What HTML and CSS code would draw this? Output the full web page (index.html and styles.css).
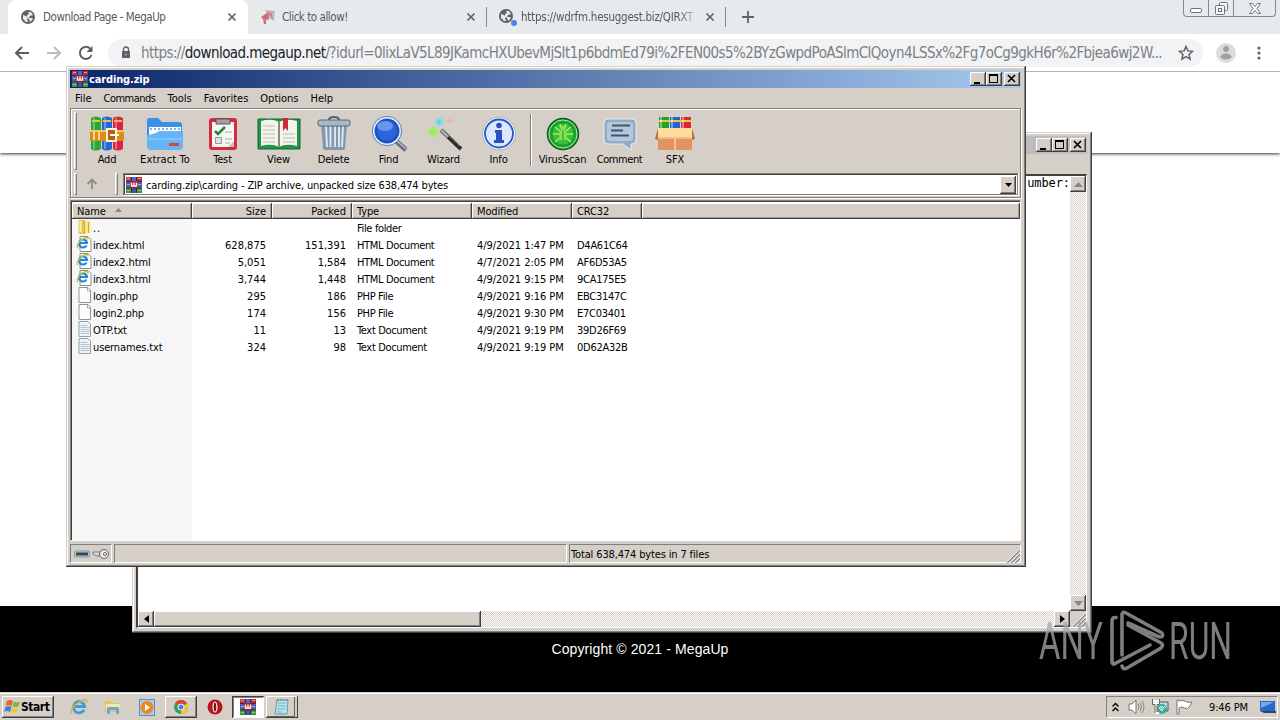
FILE: index.html
```html
<!DOCTYPE html>
<html lang="en">
<head>
  <meta charset="UTF-8">
  <title>Download Page - MegaUp</title>
  <link rel="stylesheet" href="styles.css">
</head>
<body>

<!-- shared icons -->
<svg class="sprite" width="0" height="0">
  <symbol id="globe" viewBox="0 0 14 14">
    <circle cx="7" cy="7" r="7" fill="#5f6368"/>
    <path d="M2 5l3 1 2 2-1 1 1 3-2 0-3-3zM7 2l3 0 2 3-3 1-1 2 3 0 1 1-3 3-1-3-2-2 0-2 2-1z" fill="#e8eaed"/>
  </symbol>
  <symbol id="rar" viewBox="0 0 16 16">
    <path d="M0 0h5v5H0z" fill="#c03070"/><path d="M5 0h6v5H5z" fill="#3c70d8"/><path d="M11 0h5v5h-5z" fill="#b82448"/>
    <path d="M0 5h16v6H0z" fill="#3c60c8"/><path d="M0 11h16v5H0z" fill="#28a048"/><path d="M5 11h6v5H5z" fill="#3858b0"/>
    <path d="M0 4.500h16M0 11h16M5.500 0v16M10.500 0v16" stroke="#4c2430"/>
    <path d="M1 1.500h3M12 1.500h3M1 13.500h3M12 13.500h3M1 7.500h3M12 7.500h3" stroke="#e8a848"/>
    <path d="M4 4h8v7H4z" fill="#a02434"/><path d="M5.500 5.500v3.500h5V5.500M8 5.500v3.500" stroke="#fff" stroke-width="1.400" fill="none"/>
  </symbol>
  <symbol id="min" viewBox="0 0 16 14"><path d="M4 10h6v2H4z"/></symbol>
  <symbol id="max" viewBox="0 0 16 14"><path d="M3 2h9v9H3zM4 4v6h7V4z" fill-rule="evenodd"/></symbol>
  <symbol id="cross" viewBox="0 0 16 14"><path d="M4 3l7 7M11 3l-7 7" stroke="#000" stroke-width="1.7"/></symbol>
  <symbol id="tabx" viewBox="0 0 10 10"><path d="M1.5 1.5l7 7M8.5 1.5l-7 7" stroke="#5f6368" stroke-width="1.7"/></symbol>
  <symbol id="ie" viewBox="0 0 16 16">
    <path d="M12.5 10.5A5 5 0 1 1 13 7.500H4.500" fill="none" stroke="#3c9ce0" stroke-width="2.600"/>
    <path d="M2 14C-1 12 4 4 13 1.500c3-.5 2 2 1 3" fill="none" stroke="#e0b030" stroke-width="1.300"/>
  </symbol>
  <symbol id="html" viewBox="0 0 16 16">
    <path d="M3.500.5h8l3 3v12h-11z" fill="#fff" stroke="#8c8c84"/>
    <path d="M10 9.500A4 4 0 1 1 10.500 7H3.500" fill="none" stroke="#2484d8" stroke-width="2.200"/>
    <path d="M1.500 12C-1 10 4 2.500 10 1.500c2 0 1.500 1.500 1 2" fill="none" stroke="#b8cc38" stroke-width="1.400"/>
  </symbol>
  <symbol id="blank" viewBox="0 0 16 16"><path d="M2.500.5h9l2.500 2.500v12.500H2.500z" fill="#fcfcfc" stroke="#94948e"/><path d="M11 1v3h3" fill="none" stroke="#aaa"/></symbol>
  <symbol id="txt" viewBox="0 0 16 16"><path d="M2.500.5h9l2.500 2.500v12.500H2.500z" fill="#eef4f6" stroke="#94a0a4"/><path d="M4 4.500h7M4 6.500h9M4 8.500h9M4 10.500h9M4 12.500h9" stroke="#b0c4ce"/></symbol>
  <symbol id="grip" viewBox="0 0 14 14"><path d="M1 14L14 1M5 14l9-9M9 14l5-5" stroke="#808080" stroke-width="1.500"/><path d="M0 14L14 0M4 14L14 4M8 14l6-6" stroke="#fff" stroke-width=".8"/></symbol>
</svg>

<div class="browser">
  <div class="tabs">
    <div class="tab active">
      <svg class="fav" width="14" height="14"><use href="#globe"/></svg>
      <span class="tab-title">Download Page - MegaUp</span>
      <svg class="close" width="10" height="10"><use href="#tabx"/></svg>
    </div>
    <div class="tab">
      <svg class="fav" width="16" height="16" viewBox="0 0 16 16"><path d="M6 1l9 1-1 8-8-1z" fill="#c4b4b8"/><path d="M7 3l5 1v4l-4-1z" fill="#df7e8c"/><path d="M1 8l6-4 2 7-6-1zM3 10l3 1v4H4z" fill="#cf6878"/><path d="M11 9l3 2" stroke="#888"/></svg>
      <span class="tab-title">Click to allow!</span>
      <svg class="close" width="10" height="10"><use href="#tabx"/></svg>
    </div>
    <div class="tab">
      <svg class="fav" width="18" height="18" viewBox="0 0 18 18"><use href="#globe" width="14" height="14" x="0" y="1"/><circle cx="15" cy="15" r="3" fill="#4285f4"/></svg>
      <span class="tab-title fade">https://wdrfm.hesuggest.biz/QIRXT</span>
      <svg class="close" width="10" height="10"><use href="#tabx"/></svg>
    </div>
    <svg class="plus" width="12" height="12" viewBox="0 0 12 12"><path d="M6 0v12M0 6h12" stroke="#5f6368" stroke-width="1.800"/></svg>
    <div class="win-controls">
      <span><svg width="12" height="5"><rect x=".5" y=".5" width="11" height="4" rx="1.500" fill="#fff" stroke="#70757c"/></svg></span>
      <span><svg width="13" height="13" fill="#f4f6f8" stroke="#70757c"><rect x="4.500" y=".5" width="8" height="8" rx="1"/><rect x=".5" y="3.500" width="9" height="9" rx="1"/><rect x="3.500" y="6.500" width="3" height="3"/></svg></span>
      <span class="wide"><svg width="12" height="11" fill="#fff" stroke="#70757c"><path d="M.5.5h3L6 3.500 8.500.5h3L8 5.500l3.500 5h-3L6 7.500l-2.500 3h-3L4 5.500z"/></svg></span>
    </div>
  </div>

  <div class="toolbar">
    <svg width="16" height="16" viewBox="0 0 16 16" class="nav"><path d="M15 8H2M8 2L2 8l6 6" stroke="#5a5e62"/></svg>
    <svg width="16" height="16" viewBox="0 0 16 16" class="nav"><path d="M1 8h13M8 2l6 6-6 6" stroke="#bcbcbc"/></svg>
    <svg width="16" height="16" viewBox="0 0 16 16" class="nav"><path d="M13.500 10A6 6 0 1 1 12 3.500l1.500 2" stroke="#5a5e62"/><path d="M14.500 1v6h-6z" fill="#5a5e62"/></svg>
    <div class="omnibox">
      <svg width="10" height="13" viewBox="0 0 10 13"><path d="M1 5h8v7H1z" fill="#5f6368"/><path d="M2.500 5V3.500a2.500 2.500 0 0 1 5 0V5" fill="none" stroke="#5f6368" stroke-width="1.400"/><circle cx="5" cy="8.500" r="1" fill="#aaa"/></svg>
      <span class="url">https://<b>download.megaup.net</b>/?idurl=0lixLaV5L89JKamcHXUbevMjSIt1p6bdmEd79i%2FEN00s5%2BYzGwpdPoASlmClQoyn4LSSx%2Fg7oCg9gkH6r%2Fbjea6wj2W...</span>
      <svg class="star" width="16" height="16" viewBox="0 0 16 16"><path d="M8 1.500l1.900 4.400 4.700.4-3.600 3.100 1.100 4.700L8 11.600l-4.100 2.500L5 9.400 1.400 6.300l4.700-.4z" fill="none" stroke="#5f6368" stroke-width="1.500"/></svg>
    </div>
    <svg class="avatar" width="20" height="20" viewBox="0 0 20 20"><circle cx="10" cy="10" r="10" fill="#dcdcdc"/><circle cx="10" cy="6" r="3" fill="#a0a0a0"/><ellipse cx="10" cy="13.500" rx="5.500" ry="3" fill="#a0a0a0"/></svg>
    <svg class="dots" width="4" height="14" fill="#5f6368"><circle cx="2" cy="2" r="1.600"/><circle cx="2" cy="7" r="1.600"/><circle cx="2" cy="12" r="1.600"/></svg>
  </div>

  <div class="page-header"></div>
  <div class="page-body"></div>
  <div class="page-footer">Copyright © 2021 - MegaUp</div>
</div>

<!-- notepad -->
<div class="window notepad">
  <div class="titlebar inactive">
    <div class="controls">
      <i><svg><use href="#min"/></svg></i><i><svg><use href="#max"/></svg></i><i class="x"><svg><use href="#cross"/></svg></i>
    </div>
  </div>
  <div class="note-menu"></div>
  <div class="note-area">
    <div class="note-text">umber:</div>
    <div class="vscroll">
      <i><svg width="9" height="5"><path d="M0 5l4.500-5L9 5z" fill="#888"/></svg></i>
      <i><svg width="9" height="5"><path d="M0 0l4.500 5L9 0z" fill="#888"/></svg></i>
    </div>
    <div class="hscroll">
      <i><svg width="5" height="8"><path d="M5 0L0 4l5 4z"/></svg></i>
      <div class="thumb"></div>
      <i class="end"><svg width="5" height="8"><path d="M0 0l5 4-5 4z"/></svg></i>
    </div>
    <div class="corner"><svg width="14" height="14"><use href="#grip"/></svg></div>
  </div>
</div>

<!-- winrar -->
<div class="window winrar">
  <div class="titlebar">
    <svg class="app" width="16" height="16"><use href="#rar"/></svg>
    <span>carding.zip</span>
    <div class="controls">
      <i><svg><use href="#min"/></svg></i><i><svg><use href="#max"/></svg></i><i class="x"><svg><use href="#cross"/></svg></i>
    </div>
  </div>
  <div class="menu">
    <span>File</span><span class="commands">Commands</span><span>Tools</span><span>Favorites</span><span>Options</span><span>Help</span>
  </div>

  <div class="rebar">
    <div class="tools">
      <div class="handle"></div>
      <div class="tool w58">
        <svg width="36" height="36" viewBox="0 0 36 36">
          <path d="M2 2q5-3 10 0v31q-5 3-10 0z" fill="#28a838"/><path d="M13 2q5-3 10 0v31q-5 3-10 0z" fill="#2468d8"/><path d="M24 2q5-3 10 0v31q-5 3-10 0z" fill="#dc2440"/>
          <path d="M5 2v31M16 2v31M27 2v31" stroke="#fff" stroke-opacity=".3" stroke-width="2"/>
          <path d="M3 5h8M14 5h8M25 5h8" stroke="#f0c040" stroke-width="2"/>
          <path d="M1 14h34v11H1z" fill="#e08a18"/><path d="M1 15h34" stroke="#f8c860" stroke-width="2"/>
          <path d="M5 15v9M10 15v9" stroke="#fcd890" stroke-width="2"/><path d="M18 13h9v12h-9z" fill="#b86010" stroke="#fff3dc" stroke-width="2"/><path d="M21 19h9" stroke="#fff" stroke-width="2"/>
        </svg>
        <span>Add</span>
      </div>
      <div class="tool w58">
        <svg width="38" height="36" viewBox="0 0 38 36">
          <path d="M1 10V4q0-2 3-2h8l4 4h17q3 0 3 3v12H1z" fill="#3a90ea"/><path d="M3 11h32v12H3z" fill="#fff"/><path d="M4 13h30" stroke="#8ab0d8" stroke-dasharray="2 2" stroke-width="2"/>
          <path d="M1 19q8-1 12-4h24v15q0 4-4 4H5q-4 0-4-4z" fill="#64b4fa"/><path d="M2 23h34" stroke="#9cd2ff"/><path d="M23 27h10v3H23z" fill="#d84830"/>
        </svg>
        <span class="extract">Extract To</span>
      </div>
      <div class="tool w57">
        <svg width="32" height="36" viewBox="0 0 32 36">
          <rect x="2" y="2" width="28" height="32" rx="3" fill="#d42c3c"/><path d="M5 6h22v25H5z" fill="#f6f6f2"/><path d="M9 3h14v5H9z" fill="#a0a4a8" stroke="#555"/>
          <path d="M8 15l3 3 7-7" fill="none" stroke="#208838" stroke-width="2.500"/><path d="M18 16h7M18 23h7M18 27h5" stroke="#aaa"/><path d="M8.500 21.500h6v6h-6z" fill="#e0e0e0" stroke="#999"/><path d="M27 31l-6 0 6-6z" fill="#b8c0c0"/>
        </svg>
        <span>Test</span>
      </div>
      <div class="tool">
        <svg width="44" height="36" viewBox="0 0 44 36">
          <path d="M1 3h42v30H1z" fill="#209448" stroke="#12682c"/><path d="M4 5q11-3 18 1 7-4 18-1v25q-11-3-18 1-7-4-18-1z" fill="#f6f4e8"/>
          <path d="M22 5v26" stroke="#888" stroke-width="2"/><path d="M6 10h12M6 14h12M6 18h12M6 22h12M6 26h12M26 18h12M26 22h12M26 26h12" stroke="#b8bcbc"/><path d="M26 2h5v13l-2.500-3-2.500 3z" fill="#cc2838"/>
        </svg>
        <span>View</span>
      </div>
      <div class="tool">
        <svg width="34" height="36" viewBox="0 0 34 36">
          <path d="M4 8h26l-2 24q0 2-3 2H9q-3 0-3-2z" fill="#8296ac"/><path d="M9 10l1 21M13.500 10v21M18 10v21M22 10v21M26 10l-1 21" stroke="#d8e4ee" stroke-width="2"/>
          <rect x="1" y="4" width="32" height="6" rx="2" fill="#a8b8c8" stroke="#566878"/><path d="M12 4q0-3 5-3t5 3" fill="none" stroke="#56606c" stroke-width="2"/>
        </svg>
        <span>Delete</span>
      </div>
      <div class="tool">
        <svg width="36" height="36" viewBox="0 0 36 36">
          <path d="M25 25l10 9" stroke="#666c74" stroke-width="5"/><path d="M25 24l10 9" stroke="#b4bcc4" stroke-width="1.500"/>
          <circle cx="16" cy="15" r="13.500" fill="#2a66da" stroke="#e4eefc" stroke-width="2"/><circle cx="16" cy="15" r="14.700" fill="none" stroke="#5a80b8"/><circle cx="16" cy="15" r="11" fill="none" stroke="#2050b8" stroke-width="2"/><ellipse cx="14" cy="10" rx="8" ry="5" fill="#7cacf4" opacity=".7"/>
        </svg>
        <span>Find</span>
      </div>
      <div class="tool">
        <svg width="36" height="36" viewBox="0 0 36 36">
          <path d="M15 14l20 19" stroke="#2c2c2c" stroke-width="4"/><path d="M15 14l7 7" stroke="#aaa" stroke-width="3"/><path d="M17 14l17 16" stroke="#888"/>
          <circle cx="7" cy="16" r="6" fill="#a8f070" opacity=".4"/><path d="M7 10l2 4 4 2-4 2-2 4-2-4-4-2 4-2z" fill="#9cec58"/>
          <circle cx="13" cy="6" r="5" fill="#78e0e8" opacity=".5"/><path d="M13 2l1 3 3 1-3 1-1 3-1-3-3-1 3-1z" fill="#58d4e8"/><path d="M24 2v6M21 5h6" stroke="#f0a0a8"/>
        </svg>
        <span>Wizard</span>
      </div>
      <div class="tool">
        <svg width="36" height="36" viewBox="0 0 36 36">
          <circle cx="18" cy="17.500" r="16.500" fill="#ecf2fa" stroke="#aab4c4"/><circle cx="18" cy="17.500" r="14" fill="#dce8fc" stroke="#2858c8" stroke-width="1.800"/>
          <circle cx="18" cy="9.500" r="2.800" fill="#2850c0"/><path d="M14 14h7v10h2v3H13v-3h2v-7h-1z" fill="#2850c0"/>
        </svg>
        <span>Info</span>
      </div>
      <div class="sep"></div>
      <div class="tool w57">
        <svg width="36" height="36" viewBox="0 0 36 36">
          <circle cx="18" cy="18" r="15.500" fill="#18a028" stroke="#106018" stroke-width="1.500"/><circle cx="18" cy="18" r="14" fill="none" stroke="#b8e4b8"/><circle cx="18" cy="18" r="10.500" fill="#38c038"/>
          <path d="M10 11l5 4M26 11l-5 4M8 18h7M28 18h-7M10 26l5-4M26 26l-5-4M15 8l1 4M21 8l-1 4" stroke="#a8ec70" stroke-width="1.500"/><ellipse cx="18" cy="19" rx="4" ry="6" fill="#88e050"/><circle cx="18" cy="12" r="2.500" fill="#88e050"/><path d="M18 14v11" stroke="#209428"/>
        </svg>
        <span>VirusScan</span>
      </div>
      <div class="tool w57">
        <svg width="36" height="36" viewBox="0 0 36 36">
          <path d="M6 3h24q4 0 4 4v17q0 4-4 4h-1v6l-8-6H6q-4 0-4-4V7q0-4 4-4z" fill="#94abc8" stroke="#e4ecf4"/><rect x="5" y="6" width="26" height="19" rx="3" fill="#b4c8dc"/>
          <path d="M10 9.500h18M9 14.500h12M9 19.500h18" stroke="#40546c" stroke-width="1.800"/>
        </svg>
        <span class="comment">Comment</span>
      </div>
      <div class="tool w54">
        <svg width="40" height="36" viewBox="0 0 40 36">
          <path d="M4 1h10v13H4z" fill="#20a030"/><path d="M15 1h10v13H15z" fill="#2464d0"/><path d="M26 1h10v13H26z" fill="#d82838"/><path d="M4 5h32" stroke="#ecc840" stroke-width="2"/><path d="M6 1v12M17 1v12M28 1v12" stroke="#fff" stroke-opacity=".4" stroke-width="2"/>
          <path d="M3 21h34v13H3z" fill="#e09460"/><path d="M3 12h34v9H3z" fill="#fcdc9c"/><path d="M3 12L0 23l3 1zM37 12l3 11-3 1z" fill="#b87040"/><path d="M3 21h34v2H3z" fill="#f8b880"/><path d="M19 23h2v11h-2z" fill="#f4c498"/>
        </svg>
        <span>SFX</span>
      </div>
    </div>
    <div class="address">
      <div class="handle"></div>
      <svg class="up" width="12" height="12"><path d="M6 11V2M1.500 6L6 1.500 10.500 6" fill="none" stroke="#8c8c8c" stroke-width="1.800"/></svg>
      <div class="handle second"></div>
      <div class="combo">
        <svg width="16" height="16"><use href="#rar"/></svg>
        <span>carding.zip\carding - ZIP archive, unpacked size 638,474 bytes</span>
        <i><svg width="7" height="4"><path d="M0 0h7L3.500 4z"/></svg></i>
      </div>
    </div>
  </div>

  <div class="list">
    <div class="row head">
      <div>Name<svg width="7" height="4"><path d="M0 4l3.500-4L7 4z" fill="#888"/></svg></div><div class="num">Size</div><div class="num">Packed</div><div>Type</div><div>Modified</div><div>CRC32</div><div></div>
    </div>
    <div class="row"><div class="name"><svg viewBox="0 0 16 16"><path d="M2 1h7v14H2z" fill="#e8c850"/><path d="M8 2h6v12H8z" fill="#f8e690"/><path d="M8 2v13M12 3v11" stroke="#d0a838"/><path d="M4 2v11" stroke="#fbeeac" stroke-width="2"/></svg><span class="up-dir">..</span></div><div></div><div></div><div class="type">File folder</div></div>
    <div class="row"><div class="name"><svg><use href="#html"/></svg><span>index.html</span></div><div class="num">628,875</div><div class="num">151,391</div><div class="type">HTML Document</div><div class="date">4/9/2021 1:47 PM</div><div class="crc">D4A61C64</div></div>
    <div class="row"><div class="name"><svg><use href="#html"/></svg><span>index2.html</span></div><div class="num">5,051</div><div class="num">1,584</div><div class="type">HTML Document</div><div class="date">4/7/2021 2:05 PM</div><div class="crc">AF6D53A5</div></div>
    <div class="row"><div class="name"><svg><use href="#html"/></svg><span>index3.html</span></div><div class="num">3,744</div><div class="num">1,448</div><div class="type">HTML Document</div><div class="date">4/9/2021 9:15 PM</div><div class="crc">9CA175E5</div></div>
    <div class="row"><div class="name"><svg><use href="#blank"/></svg><span>login.php</span></div><div class="num">295</div><div class="num">186</div><div class="type">PHP File</div><div class="date">4/9/2021 9:16 PM</div><div class="crc">EBC3147C</div></div>
    <div class="row"><div class="name"><svg><use href="#blank"/></svg><span>login2.php</span></div><div class="num">174</div><div class="num">156</div><div class="type">PHP File</div><div class="date">4/9/2021 9:30 PM</div><div class="crc">E7C03401</div></div>
    <div class="row"><div class="name"><svg><use href="#txt"/></svg><span>OTP.txt</span></div><div class="num">11</div><div class="num">13</div><div class="type">Text Document</div><div class="date">4/9/2021 9:19 PM</div><div class="crc">39D26F69</div></div>
    <div class="row"><div class="name"><svg><use href="#txt"/></svg><span>usernames.txt</span></div><div class="num">324</div><div class="num">98</div><div class="type">Text Document</div><div class="date">4/9/2021 9:19 PM</div><div class="crc">0D62A32B</div></div>
  </div>

  <div class="status">
    <div class="cell icons">
      <svg width="36" height="12" viewBox="0 0 36 12"><rect x=".5" y="3" width="15" height="6" rx="1" fill="#b4c4d0" stroke="#8898a4"/><path d="M2 4.500h12v3H2z" fill="#384850"/><path d="M19 4h8v2l-2 0 0 2h-2l-4-2z" fill="#ddd" stroke="#777"/><circle cx="30" cy="6" r="4.500" fill="#e8e8e8" stroke="#666"/><circle cx="31" cy="6" r="1.500" fill="#fff" stroke="#666"/></svg>
    </div>
    <div class="cell mid"></div>
    <div class="cell total">Total 638,474 bytes in 7 files<svg width="14" height="14"><use href="#grip"/></svg></div>
  </div>
</div>

<div class="taskbar">
  <div class="start">
    <svg width="17" height="16" viewBox="0 0 17 16"><path d="M3 2q3-2 6 0L7.500 7q-3-2-6 0z" fill="#e8622c"/><path d="M10 2.500q3 1.500 6 0L14.500 7q-3 2-6 0z" fill="#7cb83c"/><path d="M1.500 8q3-2 6 0L6 13q-3-2-6 0z" fill="#3c84d8"/><path d="M8 8.500q3 2 6 0L12.500 13q-3 2-6 0z" fill="#f4c430"/></svg>
    <span>Start</span>
  </div>
  <div class="launch ie"><svg width="18" height="18"><use href="#ie"/></svg></div>
  <div class="launch"><svg width="18" height="16" viewBox="0 0 18 16"><path d="M1 2h6l2 2h7v9H1z" fill="#e8c45c"/><path d="M2 5h14v6H2z" fill="#f8e8a4"/><path d="M3 15V9q0-1 1-1h10q1 0 1 1v6h-3v-4H6v4z" fill="#68a8dc"/></svg></div>
  <div class="launch"><svg width="16" height="17" viewBox="0 0 16 17"><rect x=".5" y=".5" width="15" height="16" fill="#a8ccec" stroke="#5890c4"/><circle cx="8" cy="8.500" r="6.500" fill="#f08820"/><path d="M6 5l5 3.500L6 12z" fill="#fff"/></svg></div>
  <div class="task">
    <svg width="14" height="14" viewBox="0 0 14 14"><circle cx="7" cy="7" r="7" fill="#38a050"/><path d="M7 7L1 3.500A7 7 0 0 1 13 3.500z" fill="#dc4434"/><path d="M7 7l6-3.500A7 7 0 0 1 7 14z" fill="#f8c828"/><circle cx="7" cy="7" r="3.300" fill="#fff"/><circle cx="7" cy="7" r="2.500" fill="#4080e8"/></svg>
  </div>
  <div class="launch opera"><svg width="16" height="16" viewBox="0 0 16 16"><circle cx="8" cy="8" r="7.500" fill="#b81420"/><ellipse cx="8" cy="8" rx="2.500" ry="5.500" fill="#fff"/><ellipse cx="8" cy="8" rx="1.300" ry="4.500" fill="#7c1018"/></svg></div>
  <div class="task pressed"><svg width="16" height="16"><use href="#rar"/></svg></div>
  <div class="task stacked"><svg width="16" height="18" viewBox="0 0 16 18"><path d="M3 2h11l-1 14H1z" fill="#b8e4ec" stroke="#6c98a4"/><path d="M4 5h8M4 8h8M3 11h8M3 14h5" stroke="#6cb4c4"/><path d="M4 1v2M7 1v2M10 1v2M13 1v2" stroke="#777"/></svg></div>
  <div class="tray">
    <svg width="7" height="10"><path d="M.5 4.500l3-3 3 3M.5 9l3-3 3 3" fill="none" stroke="#000" stroke-width="1.400"/></svg>
    <svg width="17" height="16" viewBox="0 0 17 16"><path d="M1 5h3l4-4v14l-4-4H1z" fill="#fff" stroke="#777"/><path d="M10 5q2 3 0 6M12 3.500q3 4.500 0 9M14 2q4 6 0 12" fill="none" stroke="#888"/></svg>
    <svg width="17" height="16" viewBox="0 0 17 16"><path d="M4 3h12v9H4z" fill="#c8dce0" stroke="#555"/><circle cx="10" cy="10" r="5" fill="#3ca89c"/><path d="M7 9l3-2 2 2-2 3zM12 7l2 2" stroke="#c8f0e4" fill="#80d4c0"/><path d="M1.500 1v4h5V1M4 1v3M4 5v9h3" fill="none" stroke="#fff" stroke-width="2"/><path d="M.5 0v5.500h2.500V14M7.500 0v5.500H5V13" fill="none" stroke="#666"/></svg>
    <svg width="17" height="16" viewBox="0 0 17 16"><path d="M1 1v14h2V9q3-2 5 0 4 2 6-2l2-4q-3 1-5 0-4-3-8-1V1z" fill="#fff" stroke="#777"/></svg>
    <span class="clock">9:46 PM</span>
    <svg width="16" height="14" viewBox="0 0 16 14"><path d="M0 1h15v10H0z" fill="#2868c8"/><path d="M1 2h13L1 8z" fill="#78a8ec"/><path d="M0 11h16v2H4z" fill="#28486c"/></svg>
  </div>
</div>

<svg class="watermark" width="200" height="66" viewBox="0 0 200 66">
  <text x="1" y="51" textLength="64" lengthAdjust="spacingAndGlyphs">ANY</text>
  <text x="131" y="51" textLength="63" lengthAdjust="spacingAndGlyphs">RUN</text>
  <path d="M78 9.500Q74 9 74 13V53Q74 58 78 55L112 37M84 47V6Q85 3 88 5L124 25Q126 29 122 29L119 28L90 15M84 58Q85 62 89 60L123 40Q126 37 123 35L90 17"/>
</svg>

</body>
</html>
```
FILE: styles.css
```css
* {
  box-sizing: border-box;
}
body {
  margin: 0;
  width: 1280px;
  height: 720px;
  overflow: hidden;
  position: relative;
  font-family: "DejaVu Sans Condensed", "DejaVu Sans", sans-serif;
  font-size: 11px;
  letter-spacing: -0.14px;
  color: #000;
  background: #fff;
}
svg {
  display: block;
  flex: none;
}
i, b {
  font-style: normal;
  font-weight: normal;
}
.sprite {
  position: absolute;
}

/* browser */
.browser {
  height: 692px;
  display: flex;
  flex-direction: column;
  isolation: isolate;
}
.tabs {
  height: 34px;
  background: #e7eaed;
  display: flex;
  padding-left: 8px;
  flex: none;
}
.tab {
  width: 239px;
  display: flex;
  align-items: center;
  padding-left: 12px;
  color: #55595e;
  font-size: 11.5px;
  letter-spacing: -0.45px;
  position: relative;
}
.tab.active {
  width: 240px;
  background: #fff;
  border-radius: 8px 8px 0 0;
  padding-left: 13px;
}
.tab + .tab:after {
  content: "";
  position: absolute;
  right: 0;
  top: 7px;
  width: 1px;
  height: 20px;
  background: #85888c;
}
.fav {
  margin-right: 8px;
}
.tab:nth-child(2) .fav {
  margin-right: 6px;
}
.tab:nth-child(3) .fav {
  margin-right: 4px;
}
.tab-title {
  flex: 1;
  white-space: nowrap;
  overflow: hidden;
}
.fade {
  letter-spacing: -0.25px;
  -webkit-mask-image: linear-gradient(to right, #000 88%, transparent);
  mask-image: linear-gradient(to right, #000 88%, transparent);
}
.close {
  margin: 0 11px 0 5px;
}
.plus {
  margin: 11px 0 0 16px;
}
.win-controls {
  margin: 0 4px 0 auto;
  width: 93px;
  height: 17px;
  border: 1px solid #85898e;
  border-top: 0;
  border-radius: 0 0 4px 4px;
  display: flex;
}
.win-controls span {
  width: 25px;
  display: flex;
  align-items: center;
  justify-content: center;
  border-right: 1px solid #85898e;
}
.win-controls span:first-child {
  padding-top: 4px;
}
.win-controls .wide {
  flex: 1;
  border: 0;
}
.toolbar {
  height: 38px;
  flex: none;
  display: flex;
  align-items: center;
  border-bottom: 1px solid #b4b4b4;
  padding: 0 19px 0 14px;
  background: #fff;
  position: relative;
  z-index: 1;
}
.nav {
  margin-right: 16px;
  fill: none;
  stroke-width: 2;
}
.omnibox {
  width: 1095px;
  height: 28px;
  margin-left: -2px;
  border-radius: 14px;
  background: #f1f3f4;
  display: flex;
  align-items: center;
  padding: 0 9px 0 13px;
}
.url {
  margin-left: 10px;
  flex: 1;
  white-space: nowrap;
  font-size: 15px;
  letter-spacing: -0.57px;
  color: #7c8084;
}
.url b {
  color: #202124;
}
.avatar {
  margin-left: 13px;
}
.dots {
  margin-left: auto;
}
.page-header {
  height: 81px;
  flex: none;
  box-shadow: 0 1px 3px rgba(0,0,0,0.8);
}
.page-body {
  flex: 1;
}
.page-footer {
  height: 86px;
  background: #000;
  color: #fff;
  font-family: "Liberation Sans", Arial, sans-serif;
  font-size: 14px;
  letter-spacing: 0.1px;
  text-align: center;
  line-height: 86px;
}

/* classic windows */
.window {
  position: absolute;
  width: 960px;
  height: 501px;
  background: #d5cfc8;
  padding: 4px 5px 4px 4px;
  box-shadow: inset -1px -1px #404040, inset 1px 1px #d4d0c8, inset -2px -2px #808080, inset 2px 2px #fff;
}
.titlebar {
  height: 18px;
  background: linear-gradient(to right, #0a246a, #a6caf0);
  display: flex;
  align-items: center;
  color: #fff;
  font-weight: bold;
  padding-left: 2px;
}
.titlebar.inactive {
  background: linear-gradient(to right, #808080, #c0c0c0);
}
.titlebar span {
  margin-left: 1px;
}
.controls {
  display: flex;
  margin-left: auto;
  padding-right: 1px;
}
.controls i, .combo i, .vscroll i, .hscroll i, .thumb {
  display: flex;
  align-items: center;
  justify-content: center;
  background: #d5cfc8;
  box-shadow: inset -1px -1px #404040, inset 1px 1px #fff, inset -2px -2px #808080;
}
.controls i {
  width: 16px;
  height: 14px;
}
.controls svg {
  width: 16px;
  height: 14px;
}
.controls .x {
  margin-left: 2px;
}
.notepad {
  left: 132px;
  top: 132px;
}
.note-menu {
  height: 20px;
}
.note-area {
  height: 454px;
  border: 1px solid #808080;
  border-top: 2px solid #404040;
  border-left: 2px solid #404040;
  border-right-color: #fff;
  border-bottom-color: #fff;
  background: #fff;
  display: grid;
  grid-template-columns: 1fr 16px;
  grid-template-rows: 1fr 16px;
}
.note-text {
  text-align: right;
  font-family: "DejaVu Sans Mono", monospace;
  font-size: 12px;
  letter-spacing: -0.1px;
  line-height: 14px;
}
.vscroll, .hscroll {
  background: repeating-conic-gradient(#fff 0 25%, #d5cfc8 0 50%) 0 0 / 2px 2px;
  display: flex;
}
.vscroll {
  flex-direction: column;
  justify-content: space-between;
}
.vscroll i, .hscroll i {
  width: 16px;
  height: 16px;
}
.thumb {
  width: 327px;
}
.hscroll .end {
  margin-left: auto;
}
.corner {
  background: #d5cfc8;
  padding: 2px;
}

/* winrar */
.winrar {
  left: 66px;
  top: 66px;
}
.menu {
  height: 20px;
  line-height: 21px;
  padding-left: 5px;
  display: flex;
  gap: 12px;
  letter-spacing: 0;
}
.menu span {
  white-space: nowrap;
}
.menu .commands {
  letter-spacing: -0.5px;
}
.rebar {
  height: 90px;
  border: 1px solid #808080;
  box-shadow: inset 1px 1px #fff, 1px 1px #fff;
}
.tools {
  display: flex;
  height: 64px;
}
.handle {
  width: 3px;
  height: 58px;
  margin: 3px 0 0 3px;
  border: 1px solid #fff;
  border-right-color: #808080;
  border-bottom-color: #808080;
}
.tool {
  width: 55px;
  padding-top: 7px;
  display: flex;
  flex-direction: column;
  align-items: center;
}
.tool span {
  white-space: nowrap;
  line-height: 16px;
}
.tool .extract {
  letter-spacing: 0.1px;
}
.tool .comment {
  letter-spacing: -0.4px;
}
.handle + .tool {
  margin-left: 1px;
}
.w58 {
  width: 58px;
}
.w57 {
  width: 57px;
}
.w54 {
  width: 54px;
}
.sep {
  width: 2px;
  height: 52px;
  margin: 5px 2px 0 4px;
  border-left: 1px solid #808080;
  border-right: 1px solid #fff;
}
.address {
  display: flex;
  height: 24px;
}
.address .handle {
  height: 22px;
  margin-top: 0;
}
.up {
  margin: 5px 0 0 9px;
}
.address .second {
  margin-left: 17px;
}
.combo {
  flex: 1;
  height: 22px;
  margin: 0 2px 0 5px;
  border: 1px solid #808080;
  box-shadow: inset 1px 1px #404040, 1px 1px #fff;
  background: #fff;
  display: flex;
  align-items: center;
  padding: 2px 1px 1px 2px;
}
.combo span {
  margin-left: 4px;
  padding-top: 1px;
  flex: 1;
}
.combo i {
  width: 16px;
  height: 18px;
}
.list {
  margin: 2px 0 0;
  height: 341px;
  border: 1px solid #808080;
  border-right-color: #fff;
  border-bottom-color: #fff;
  box-shadow: inset 1px 1px #404040;
  padding: 2px 0 0 1px;
  background: linear-gradient(to right, #f6f6f6 121px, #fff 121px);
}
.row {
  display: grid;
  grid-template-columns: 120px 80px 80px 120px 100px 70px 1fr;
  height: 17px;
  line-height: 19px;
  white-space: nowrap;
}
.row > div {
  padding: 0 5px;
}
.row .num {
  text-align: right;
  padding-right: 6px;
  letter-spacing: 0;
}
.row .type {
  letter-spacing: -0.35px;
}
.row .date {
  letter-spacing: -0.05px;
}
.row .crc {
  letter-spacing: -0.27px;
}
.row .name {
  display: flex;
  padding: 0 0 0 4px;
}
.name svg {
  width: 17px;
  height: 16px;
}
.name .up-dir {
  letter-spacing: 0.8px;
}
.row.head {
  height: 16px;
}
.head > div {
  background: #d5cfc8;
  line-height: 18px;
  height: 16px;
  box-shadow: inset -1px -1px #404040, inset 1px 1px #fff, inset -2px -2px #a09c94;
}
.head svg {
  display: inline-block;
  margin: 0 0 3px 9px;
}
.status {
  margin-top: 3px;
  height: 19px;
  display: flex;
  gap: 2px;
}
.cell {
  border: 1px solid #808080;
  border-right-color: #fff;
  border-bottom-color: #fff;
  line-height: 19px;
}
.icons {
  width: 42px;
  padding: 3px 0 0 3px;
}
.mid {
  width: 453px;
}
.total {
  flex: 1;
  display: flex;
  justify-content: space-between;
  padding-left: 1px;
}
.total svg {
  margin-top: 4px;
}

/* taskbar */
.taskbar {
  height: 28px;
  background: #d5cfc8;
  border-top: 1px solid #d5cfc8;
  box-shadow: inset 0 1px #fff;
  display: flex;
  align-items: center;
  padding: 1px 2px 0 2px;
}
.start, .task {
  height: 22px;
  display: flex;
  align-items: center;
  box-shadow: inset -1px -1px #404040, inset 1px 1px #fff, inset -2px -2px #808080;
}
.start {
  width: 52px;
  padding-left: 2px;
  font-size: 12px;
  font-weight: bold;
  letter-spacing: -0.45px;
}
.launch {
  width: 34px;
  display: flex;
  justify-content: center;
}
.launch.ie {
  margin-left: 8px;
}
.task {
  width: 32px;
  justify-content: center;
  margin-left: 1px;
}
.launch.opera {
  width: 35px;
}
.pressed {
  margin-left: 0;
  background: #fff;
  box-shadow: inset 1px 1px #404040, inset -1px -1px #fff, inset 2px 2px #808080;
}
.stacked {
  margin-left: 2px;
  box-shadow: inset -1px -1px #404040, inset 1px 1px #fff, inset -3px 0 #d5cfc8, inset -4px -2px #606060;
}
.tray {
  width: 172px;
  height: 22px;
  margin-left: auto;
  border: 1px solid #808080;
  border-right-color: #fff;
  border-bottom-color: #fff;
  display: flex;
  align-items: center;
  gap: 7px;
  padding: 0 1px 0 5px;
}
.tray svg:first-child {
  margin-right: 2px;
}
.clock {
  margin-left: 9px;
  flex: 1;
  white-space: nowrap;
}

.watermark {
  position: absolute;
  left: 1038px;
  top: 608px;
  opacity: 0.75;
  overflow: visible;
}
.watermark text {
  font-family: Roboto, sans-serif;
  font-size: 52px;
  font-weight: 400;
  letter-spacing: 0;
  fill: #a8a8a8;
}
.watermark path {
  fill: none;
  stroke: #a8a8a8;
  stroke-width: 3.6;
  stroke-linecap: round;
}
```
